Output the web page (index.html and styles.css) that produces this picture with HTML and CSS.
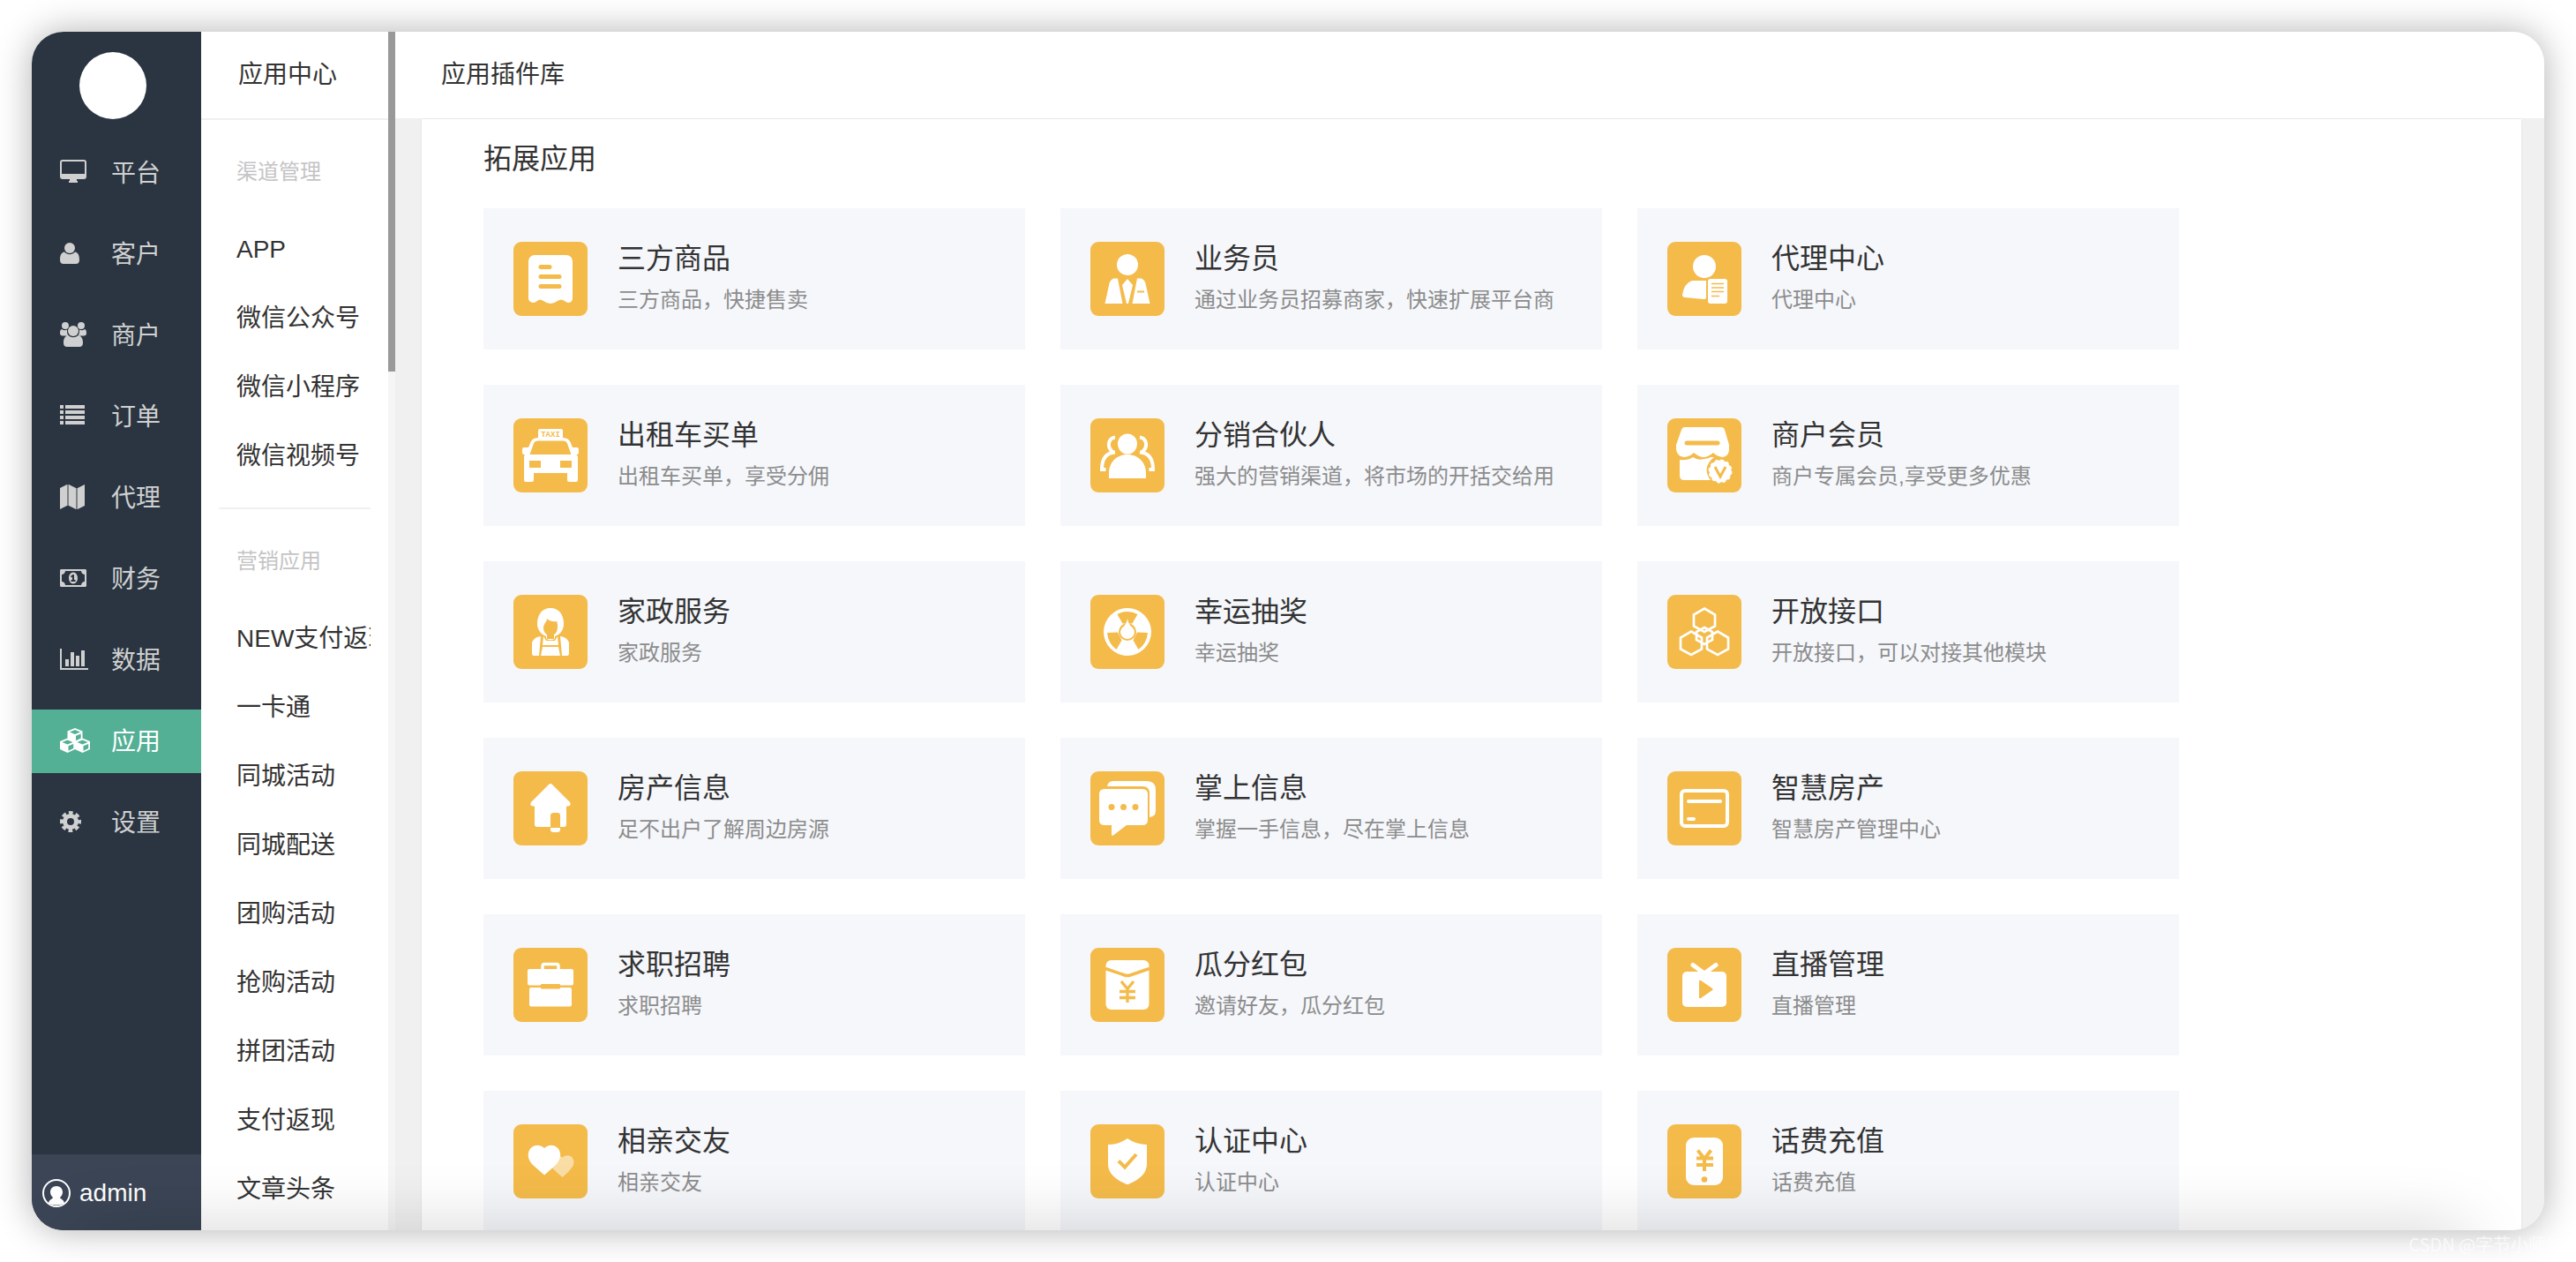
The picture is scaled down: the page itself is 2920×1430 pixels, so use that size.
FILE: index.html
```html
<!DOCTYPE html>
<html lang="zh-CN">
<head>
    <meta charset="UTF-8">
    <meta name="viewport" content="width=device-width, initial-scale=1.0">
    <title>应用插件库</title>
    <link rel="stylesheet" href="styles.css">
</head>
<body>
    <div id="container">
        <!-- 左侧主导航 -->
        <div class="sidebar">
            <div class="avatar"></div>
            <ul class="nav">
                <li><a href="#"><svg viewBox="0 0 34 30"><path fill-rule="evenodd" d="M3 0h24a3 3 0 0 1 3 3v16a3 3 0 0 1-3 3h-8v2h1v2H10v-2h1v-2H3a3 3 0 0 1-3-3V3a3 3 0 0 1 3-3zM3 2a1 1 0 0 0-1 1v13h26V3a1 1 0 0 0-1-1z"/></svg>平台</a></li>
                <li><a href="#"><svg viewBox="0 0 34 30"><ellipse cx="11" cy="8" rx="6" ry="6"/><path d="M5 12.500c3.500 3.500 8.500 3.500 12 0 3.500.5 5 4 5 9 0 3-1.500 4.500-4 4.500H4c-2.500 0-4-1.500-4-4.500 0-5 1.500-8.500 5-9z"/></svg>客户</a></li>
                <li><a href="#"><svg viewBox="0 0 34 30"><circle cx="6" cy="4" r="4"/><circle cx="24" cy="4" r="4"/><circle cx="15" cy="10" r="6"/><path d="M2 8c2 1.500 4 1.500 6 .5 0 3 0 4.500 1.500 7H3c-2 0-3-1-3-3 0-2.500.5-4 2-4.500zM28 8c-2 1.500-4 1.500-6 .5 0 3 0 4.500-1.500 7H27c2 0 3-1 3-3 0-2.500-.5-4-2-4.500zM9.500 15c3 3 8 3 11 0 4 .5 5.500 4 5.500 8.500 0 3-1.500 4.500-4 4.500H8c-2.500 0-4-1.500-4-4.500 0-4.500 1.500-8 5.500-8.500z"/></svg>商户</a></li>
                <li><a href="#"><svg viewBox="0 0 34 30"><path d="M0 2h4v4H0zM6 2h22v4H6zM0 8h4v4H0zM6 8h22v4H6zM0 14h4v4H0zM6 14h22v4H6zM0 20h4v4H0zM6 20h22v4H6z"/></svg>订单</a></li>
                <li><a href="#"><svg viewBox="0 0 34 30"><path d="M8 0v24L0 28V4zM10 0l8 4v24l-8-4zM28 0v24l-8 4V4z"/><path opacity=".5" d="M8 0h2v24H8zM18 4h2v24h-2z"/></svg>代理</a></li>
                <li><a href="#"><svg viewBox="0 0 34 30"><path fill-rule="evenodd" d="M1 4h28l1 1v18l-1 1H1l-1-1V5zM6 6c0 2-2 4-4 4v8c2 0 4 2 4 4h18c0-2 2-4 4-4v-8c-2 0-4-2-4-4z"/><path fill-rule="evenodd" d="M15 7.500c3 0 5 3 5 6.500s-2 6.500-5 6.500-5-3-5-6.500 2-6.500 5-6.500zM14.500 10L12 12l1 1.500 1-.8V16h-1.500v2h5v-2H16v-6z"/></svg>财务</a></li>
                <li><a href="#"><svg viewBox="0 0 34 30"><path d="M0 2h2v22h30v2H0zM6 14h4v8H6zM12 6h4v16h-4zM18 10h4v12h-4zM24 4h4v18h-4z"/></svg>数据</a></li>
                <li class="active"><a href="#"><svg viewBox="0 0 34 30"><g id="cube"><path fill-rule="evenodd" d="M17 0l8.500 3.500v9L17 16.500l-8.500-4v-9zM17 2l-6 2.500L17 7l6-2.500zM18 8.800v5.400l5.700-2.700V6.400z"/></g><use href="#cube" x="-8.500" y="11.500"/><use href="#cube" x="8.500" y="11.500"/></svg>应用</a></li>
                <li><a href="#"><svg viewBox="0 0 34 30"><circle class="line" cx="12" cy="14" r="6.500" stroke-width="5"/><circle class="line" cx="12" cy="14" r="10" stroke-width="4" stroke-dasharray="4.600 3.254" stroke-dashoffset="2.300"/></svg>设置</a></li>
            </ul>
            <a href="#" class="admin"><svg viewBox="0 0 32 32"><circle class="line" cx="16" cy="16" r="15" stroke-width="2"/><path d="M16 8c4.500 0 7 3 7 7 0 2.500-1.500 4.500-3 6 0 1.500 4.500 2 5 6.500-5 2.500-13 2.500-18 0 .5-4.500 5-5 5-6.500-1.500-1.500-3-3.500-3-6 0-4 2.500-7 7-7z"/></svg>admin</a>
        </div>

        <!-- 二级菜单 -->
        <div class="menu">
            <h2>应用中心</h2>
            <div class="menu_list">
                <h3>渠道管理</h3>
                <ul>
                    <li><a href="#">APP</a></li>
                    <li><a href="#">微信公众号</a></li>
                    <li><a href="#">微信小程序</a></li>
                    <li><a href="#">微信视频号</a></li>
                </ul>
                <hr>
                <h3>营销应用</h3>
                <ul>
                    <li><a href="#">NEW支付返现</a></li>
                    <li><a href="#">一卡通</a></li>
                    <li><a href="#">同城活动</a></li>
                    <li><a href="#">同城配送</a></li>
                    <li><a href="#">团购活动</a></li>
                    <li><a href="#">抢购活动</a></li>
                    <li><a href="#">拼团活动</a></li>
                    <li><a href="#">支付返现</a></li>
                    <li><a href="#">文章头条</a></li>
                </ul>
            </div>
        </div>
        <div class="scrollbar"><div class="thumb"></div></div>

        <!-- 内容区 -->
        <div class="main">
            <h1>应用插件库</h1>
            <div class="content">
                <h2>拓展应用</h2>
                <div class="cards">
                    <a href="#" class="card">
                        <svg viewBox="0 0 84 84"><path d="M24 15h36a7 7 0 0 1 7 7v42q0 4-4 5-3 0-5-2-4-3-8 0-4 3-8 3t-8-3q-4-3-7 0-2 2-5 2-5-1-5-5V22a7 7 0 0 1 7-7z"/><path class="cut" d="M31 28.500h10M31 39.500h21M31 50.500h21" stroke-width="5" stroke-linecap="round"/></svg>
                        <div class="info"><h3>三方商品</h3><p>三方商品，快捷售卖</p></div>
                    </a>
                    <a href="#" class="card">
                        <svg viewBox="0 0 84 84"><circle cx="42" cy="26" r="12"/><path d="M16.500 70l5-23q2-5.500 6-5.500H31L36.500 70zM67.500 70l-5-23q-2-5.500-6-5.500H53L47.500 70zM42 42l6 7-5 21h-2l-5-21z"/><path class="cut" d="M53 56.500h8" stroke-width="2"/></svg>
                        <div class="info"><h3>业务员</h3><p>通过业务员招募商家，快速扩展平台商</p></div>
                    </a>
                    <a href="#" class="card">
                        <svg viewBox="0 0 84 84"><circle cx="42" cy="28" r="13"/><path d="M28 44h16v19q0 2-3 2l-21-2q-3 0-3-3 2-13 11-16z"/><rect x="46" y="42" width="22" height="28" rx="3"/><path class="cut" d="M50 47.500h14M50 52h14M50 56.500h14M50 61.500h9" stroke-width="1.500"/></svg>
                        <div class="info"><h3>代理中心</h3><p>代理中心</p></div>
                    </a>
                    <a href="#" class="card">
                        <svg viewBox="0 0 84 84"><path fill-rule="evenodd" d="M30 12h24q2 0 2 2v8q7 0 9 6l2 5h5q2 0 2 2v4q0 2-3 2 2 1 2 3v26q0 2-2 2h-8q-2 0-2-2v-8H23v8q0 2-2 2h-7q-2 0-2-2V44q0-2 1-3-3 0-3-2v-4q0-2 2-2h5l2-5q2-6 9-6v-8q0-2 2-2zM28 25.500q-4 0-5 3L18.500 41h47L61 28.500q-1-3-5-3zM18 48v8h13v-8zM53 48v8h13v-8z"/><text x="42" y="21" text-anchor="middle">TAXI</text></svg>
                        <div class="info"><h3>出租车买单</h3><p>出租车买单，享受分佣</p></div>
                    </a>
                    <a href="#" class="card">
                        <svg viewBox="0 0 84 84"><ellipse cx="42" cy="29" rx="11" ry="11.500"/><path d="M21 68v-6c0-12 9-21 21-21s21 9 21 21v6z"/><path class="line" d="M28 21.500c-8 1-10 12-2 17M28 38.500C18 39 13 46 13 58h4.500M56 21.500c8 1 10 12 2 17M56 38.500C66 39 71 46 71 58h-4.500" stroke-width="4"/></svg>
                        <div class="info"><h3>分销合伙人</h3><p>强大的营销渠道，将市场的开括交给用</p></div>
                    </a>
                    <a href="#" class="card">
                        <svg viewBox="0 0 84 84"><path d="M20 10h41q3 0 4 3l5 17v5c0 5-3 9-8 9q-6-1-10-5-6 5-11 5t-11-5q-4 4-10 5c-6 0-10-4-10-10v-4l6-17q1-3 4-3z"/><path class="cut" d="M22 28h35" stroke-width="5" stroke-linecap="round"/><path d="M14 47q9 1 15-3 6 4 12 2 5 0 8-2h4c-11 9-10 18-4 26H19q-5 0-5-5z"/><circle cx="60" cy="60" r="12.500"/><circle class="line" cx="60" cy="60" r="12.500" stroke-width="2" stroke-dasharray="3.500 3.050"/><path class="cut" d="M54 55l6 11 6-11" stroke-width="3"/></svg>
                        <div class="info"><h3>商户会员</h3><p>商户专属会员,享受更多优惠</p></div>
                    </a>
                    <a href="#" class="card">
                        <svg viewBox="0 0 84 84"><path fill-rule="evenodd" d="M42 15c10 0 15 8 15 18 0 7-4 12-10 14v2c-1 3-9 3-10 0v-2c-6-2-10-8-10-14 0-10 5-18 15-18zM38 27c0 4-4 5-4 11 0 3 2 6 4 7v5h8v-5c2-1 4-4 4-8 0-3 0-5-1-7-5 1-9-1-11-3z"/><path d="M31 47l-2 22h-6q-2 0-2-3V54q2-6 10-7zM53 47l2 22h6q2 0 2-3V54q-2-6-10-7zM34 47l3 5h10l3-5 1 10H33zM33 59h18l2 10H31z"/></svg>
                        <div class="info"><h3>家政服务</h3><p>家政服务</p></div>
                    </a>
                    <a href="#" class="card">
                        <svg viewBox="0 0 84 84"><circle cx="42" cy="42" r="27"/><path class="hole" d="M36.500 32.500L30.500 22q11.500-6 23 0l-6 10.500zM31 42.500L19 43q1 12 10.500 19l6-10.500zM53 42.500l12 .5q-1 12-10.500 19l-6-10.500z"/><circle class="hole" cx="42" cy="42" r="10"/><path d="M42 27q1 6 5 9.500c6 5 2 13.500-5 13.500s-11-8.500-5-13.500q4-3.500 5-9.500z"/></svg>
                        <div class="info"><h3>幸运抽奖</h3><p>幸运抽奖</p></div>
                    </a>
                    <a href="#" class="card">
                        <svg viewBox="0 0 84 84"><path class="line" d="M42 15.500l12 7v13L42 42l-12-6.500v-13zM27 41.500l12 7v13L27 68l-12-6.500v-13zM57 41.500l12 7v13L57 68l-12-6.500v-13zM42 37l9 5v9l-9 5-9-5v-9z" stroke-width="2.700"/></svg>
                        <div class="info"><h3>开放接口</h3><p>开放接口，可以对接其他模块</p></div>
                    </a>
                    <a href="#" class="card">
                        <svg viewBox="0 0 84 84"><path d="M40 15q2-2 4 0l20 20q2 4-2 4.500h-2V60q0 3-3 3h-4V50q0-3-3-3h-4q-4 0-4 3v13H27q-3 0-3-3V39.500h-2q-4-.5-2-4.500zM42 64h11v2q0 3-3 3h-5q-3 0-3-3z"/></svg>
                        <div class="info"><h3>房产信息</h3><p>足不出户了解周边房源</p></div>
                    </a>
                    <a href="#" class="card">
                        <svg viewBox="0 0 84 84"><path d="M19 17q1-6 7-6h38q10 0 10 10v24q0 6-7 7V25q0-8-8-8z"/><path d="M16 20h43q6 0 6 6v29q0 6-6 6H41L26 72.500q-2 1-2-1V61h-8q-6 0-6-6V26q0-6 6-6z"/><circle class="hole" cx="24" cy="40.500" r="3.500"/><circle class="hole" cx="37.500" cy="40.500" r="3.500"/><circle class="hole" cx="51" cy="40.500" r="3.500"/></svg>
                        <div class="info"><h3>掌上信息</h3><p>掌握一手信息，尽在掌上信息</p></div>
                    </a>
                    <a href="#" class="card">
                        <svg viewBox="0 0 84 84"><rect class="line" x="16" y="22" width="52" height="40" rx="4" stroke-width="4"/><path class="line" d="M24 34h36M24 54h6" stroke-width="4" stroke-linecap="round"/></svg>
                        <div class="info"><h3>智慧房产</h3><p>智慧房产管理中心</p></div>
                    </a>
                    <a href="#" class="card">
                        <svg viewBox="0 0 84 84"><path class="line" d="M33 26v-5q0-2.500 2-2.500h14q2 0 2 2.500v5" stroke-width="3.500"/><rect x="16" y="24" width="52" height="18.500" rx="2"/><rect x="18" y="45" width="48" height="21.500" rx="2"/><rect class="hole" x="31" y="41" width="22" height="5.500" rx="1"/></svg>
                        <div class="info"><h3>求职招聘</h3><p>求职招聘</p></div>
                    </a>
                    <a href="#" class="card">
                        <svg viewBox="0 0 84 84"><rect x="17.500" y="14" width="49" height="56" rx="6"/><path class="cut" d="M17 23.500L39 31q3 1 6 0l22-7.500" stroke-width="3.500"/><path class="cut" d="M35 38l7 8.500 7-8.500M42 46v16M33 49.500h18M33 56.500h18" stroke-width="3.300"/></svg>
                        <div class="info"><h3>瓜分红包</h3><p>邀请好友，瓜分红包</p></div>
                    </a>
                    <a href="#" class="card">
                        <svg viewBox="0 0 84 84"><path class="line" d="M29 19.500l13 9.500 13-9.500" stroke-width="5" stroke-linecap="round"/><rect x="17" y="27" width="50" height="40" rx="5"/><path class="hole" d="M36 38q0-2 2-1l13 9q1.500 1 0 2l-13 9q-2 1-2-1z"/></svg>
                        <div class="info"><h3>直播管理</h3><p>直播管理</p></div>
                    </a>
                    <a href="#" class="card">
                        <svg viewBox="0 0 84 84"><path opacity=".5" d="M55.500 60L46 51.500C38 43 48 31 55.500 37.500 63 31 72 39 67 48q-4 6-11.500 12z"/><path d="M35 57.500L22 46C9 33 23 17 35 27c12-10 26 6 13 19z"/></svg>
                        <div class="info"><h3>相亲交友</h3><p>相亲交友</p></div>
                    </a>
                    <a href="#" class="card">
                        <svg viewBox="0 0 84 84"><path d="M42 16q10 7 22 7v22q0 14-20 22.500-2 1-4 0Q20 59 20 45V23q12 0 22-7z"/><path class="cut" d="M32 41.500l7 7 13-14.500" stroke-width="4"/></svg>
                        <div class="info"><h3>认证中心</h3><p>认证中心</p></div>
                    </a>
                    <a href="#" class="card">
                        <svg viewBox="0 0 84 84"><rect x="21" y="15" width="42" height="54" rx="9"/><path class="cut" d="M34.500 29.500L42 39l7.500-9.500M42 38v15M33 38.500h19M33 46h19" stroke-width="4"/><circle class="hole" cx="42" cy="62.500" r="3.300"/></svg>
                        <div class="info"><h3>话费充值</h3><p>话费充值</p></div>
                    </a>
                </div>
            </div>
        </div>
        <div class="shade"></div>
    </div>
    <span class="watermark">CSDN @字节小师妹</span>
</body>
</html>
```

FILE: styles.css
```css
*{margin: 0; padding: 0; box-sizing: border-box;}
body{position: relative; height: 100vh; padding: 36px; overflow: hidden; background: #fff; color: #333; font-family: "Liberation Sans","Noto Sans CJK SC",sans-serif; font-size: 28px;}
ul{list-style: none;}
a{color: inherit; text-decoration: none;}
h1,h2,h3{font-weight: normal;}
svg{flex: none; fill: currentColor;}
svg .line{fill: none; stroke: currentColor;}

#container{position: relative; display: flex; height: 100%; border-radius: 36px; overflow: hidden; background: #fff; box-shadow: 0 0 40px rgba(0,0,0,.31);}

/* 主导航 */
.sidebar{display: flex; flex-direction: column; flex: none; width: 192px; background: #2a3541; color: #d0d0d0;}
.avatar{flex: none; width: 76px; height: 76px; margin: 23px auto 25px 54px; border-radius: 50%; background: #fff;}
.nav{flex: 1;}
.nav li{margin-bottom: 20px;}
.nav a{display: flex; align-items: center; gap: 24px; height: 72px; padding: 0 0 4px 32px;}
.nav svg{width: 34px; height: 30px; margin-top: 4px;}
.nav .active{background: #54b095; color: #fff;}
.admin{display: flex; align-items: center; gap: 10px; height: 86px; padding: 2px 12px 0; background: #3b4555; color: #fff;}
.admin svg{width: 32px; height: 32px;}

/* 二级菜单 */
.menu{flex: none; width: 212px; overflow: hidden;}
.menu h2{height: 100px; padding-left: 42px; line-height: 98px; font-size: 28px; border-bottom: 2px solid #f0f0f0;}
.menu_list{padding: 0 20px;}
.menu_list h3{padding: 18px 0 8px 20px; line-height: 82px; font-size: 24px; color: #c4c4c4;}
.menu_list li{padding-left: 20px; line-height: 78px; overflow: hidden; white-space: nowrap;}
.menu_list hr{height: 2px; margin-top: 19px; border: 0; background: #f0f0f0;}
.scrollbar{flex: none; width: 8px; background: #f5f5f5;}
.thumb{height: 385px; background: #999;}

/* 内容区 */
.main{display: flex; flex-direction: column; flex: 1; min-width: 0; background: #f0f0f0;}
.main h1{flex: none; height: 98px; padding-left: 52px; line-height: 98px; font-size: 28px; background: #fff;}
.content{flex: 1; min-height: 0; margin: 1px 26px 0 30px; padding: 20px 70px 0; overflow: hidden; background: #fff; box-shadow: 0 0 2px rgba(0,0,0,.1);}
.content h2{margin-bottom: 31px; line-height: 50px; font-size: 32px;}
.cards{display: grid; grid-template-columns: repeat(auto-fill, 614px); gap: 40px;}
.card{display: flex; align-items: center; gap: 34px; height: 160px; padding: 0 34px 2px; background: #f5f7fb;}
.card svg{width: 84px; height: 84px; margin-top: 2px; border-radius: 9px; background: #f4bb4a; color: #fff;}
.card svg .cut{fill: none; stroke: #f4bb4a;}
.card svg .hole{fill: #f4bb4a;}
.card text{font: bold 9px "Liberation Mono",monospace; fill: #f4bb4a;}
.info{width: 410px; overflow: hidden; white-space: nowrap;}
.info h3{line-height: 50px; font-size: 32px;}
.info p{line-height: 44px; font-size: 24px; color: #8c8c8c;}

/* 底部阴影 */
.shade{position: absolute; left: 50px; right: 90px; top: 100%; height: 60px; box-shadow: 0 0 76px rgba(0,0,0,.18); pointer-events: none;}
.watermark{position: absolute; right: 14px; bottom: 5px; line-height: 30px; font-family: "Noto Sans CJK SC",sans-serif; font-size: 20px; color: rgba(255,255,255,.7);}
```
